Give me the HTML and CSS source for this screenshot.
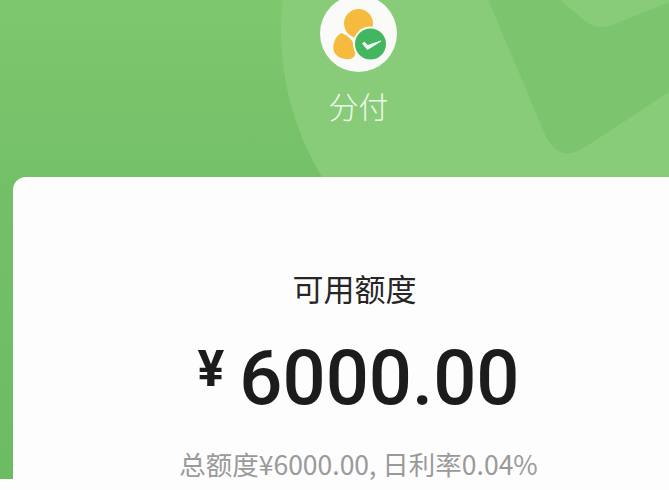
FILE: index.html
```html
<!DOCTYPE html>
<html lang="zh-CN">
<head>
<meta charset="utf-8">
<title>分付</title>
<link rel="stylesheet" href="styles.css">
</head>
<body>
<main class="screen">
  <svg class="decor" width="717" height="180" viewBox="0 0 717 180" aria-hidden="true">
    <circle cx="565" cy="30" r="284" fill="#88cc79"/>
    <path d="M484 -10 L544 132 Q556 162 580 150 Q600 138 717 60 L717 -10 Z" fill="#7cc56e"/>
    <path d="M548 -10 L584 20 Q596 31 612 25 L680 -2 L680 -10 Z" fill="#88cc79"/>
  </svg>
  <header class="brand">
    <svg class="logo" width="78" height="78" viewBox="0 0 78 78" aria-hidden="true">
      <circle cx="38.5" cy="38.5" r="38.5" fill="#fafbf9"/>
      <ellipse cx="38.5" cy="28.5" rx="14.5" ry="14.5" fill="#f6bb3e"/>
      <path d="M22 38 C15 41 12.5 49 13.5 55 C15 62 24 65 30 64 C36 63 37 55 34 49 C31 44 28 41 22 38 Z" fill="#f6bb3e"/>
      <circle cx="50.5" cy="49" r="17.5" fill="#fafbf9"/>
      <circle cx="50.5" cy="49" r="15.5" fill="#43b65f"/>
      <path d="M42.5 48.5 L47.5 54.5 L61 46 L47.8 50.5 L44.5 47.3 Z" fill="#f4faf3" stroke="#f4faf3" stroke-width="1" stroke-linejoin="round"/>
    </svg>
    <h1 class="brand-name">分付</h1>
  </header>
  <section class="card">
    <h2 class="label">可用额度</h2>
    <p class="amount"><span class="currency">¥</span><span class="value">6000.00</span></p>
    <p class="detail">总额度¥6000.00, 日利率0.04%</p>
  </section>
</main>
<div class="footer"></div>
</body>
</html>
```
FILE: styles.css
```css
html, body {
  margin: 0;
  padding: 0;
  width: 669px;
  height: 490px;
  overflow: hidden;
  background: #fdfdfd;
  font-family: "Noto Sans CJK SC", "Noto Sans", sans-serif;
}
.screen {
  position: relative;
  width: 717px;
  height: 479px;
  display: flex;
  flex-direction: column;
  background: linear-gradient(180deg, #7ec86e 0%, #74c068 180px, #6cbc64 100%);
}
.decor {
  position: absolute;
  top: 0;
  left: 0;
}
.brand {
  position: relative;
  height: 177px;
  flex: none;
  display: flex;
  flex-direction: column;
  align-items: center;
}
.logo {
  display: block;
  margin-top: -5px;
  flex: none;
}
.brand-name {
  margin: 10px 0 0;
  font-size: 30px;
  line-height: 44px;
  font-weight: 300;
  color: #eff9ec;
}
.card {
  position: relative;
  flex: 1;
  margin: 0 13px;
  border-radius: 13px 13px 0 0;
  background: #fdfdfd;
  display: flex;
  flex-direction: column;
  align-items: center;
  color: #222;
}
.label {
  margin: 88px 8px 0 0;
  font-size: 31px;
  line-height: 46px;
  font-weight: 400;
  color: #262626;
}
.amount {
  margin: 22px 0 0;
  display: flex;
  align-items: flex-start;
  color: #1c1c1c;
  font-family: Roboto, sans-serif;
  font-weight: 500;
}
.currency {
  font-size: 50px;
  font-weight: 700;
  line-height: 72px;
  margin-right: 15px;
}
.value {
  font-size: 76px;
  line-height: 90px;
}
.detail {
  margin: 28px 0 0;
  font-size: 26.5px;
  line-height: 25px;
  color: #9a9a9a;
  flex: none;
}
.footer {
  height: 11px;
  background: #fdfdfd;
}
```
